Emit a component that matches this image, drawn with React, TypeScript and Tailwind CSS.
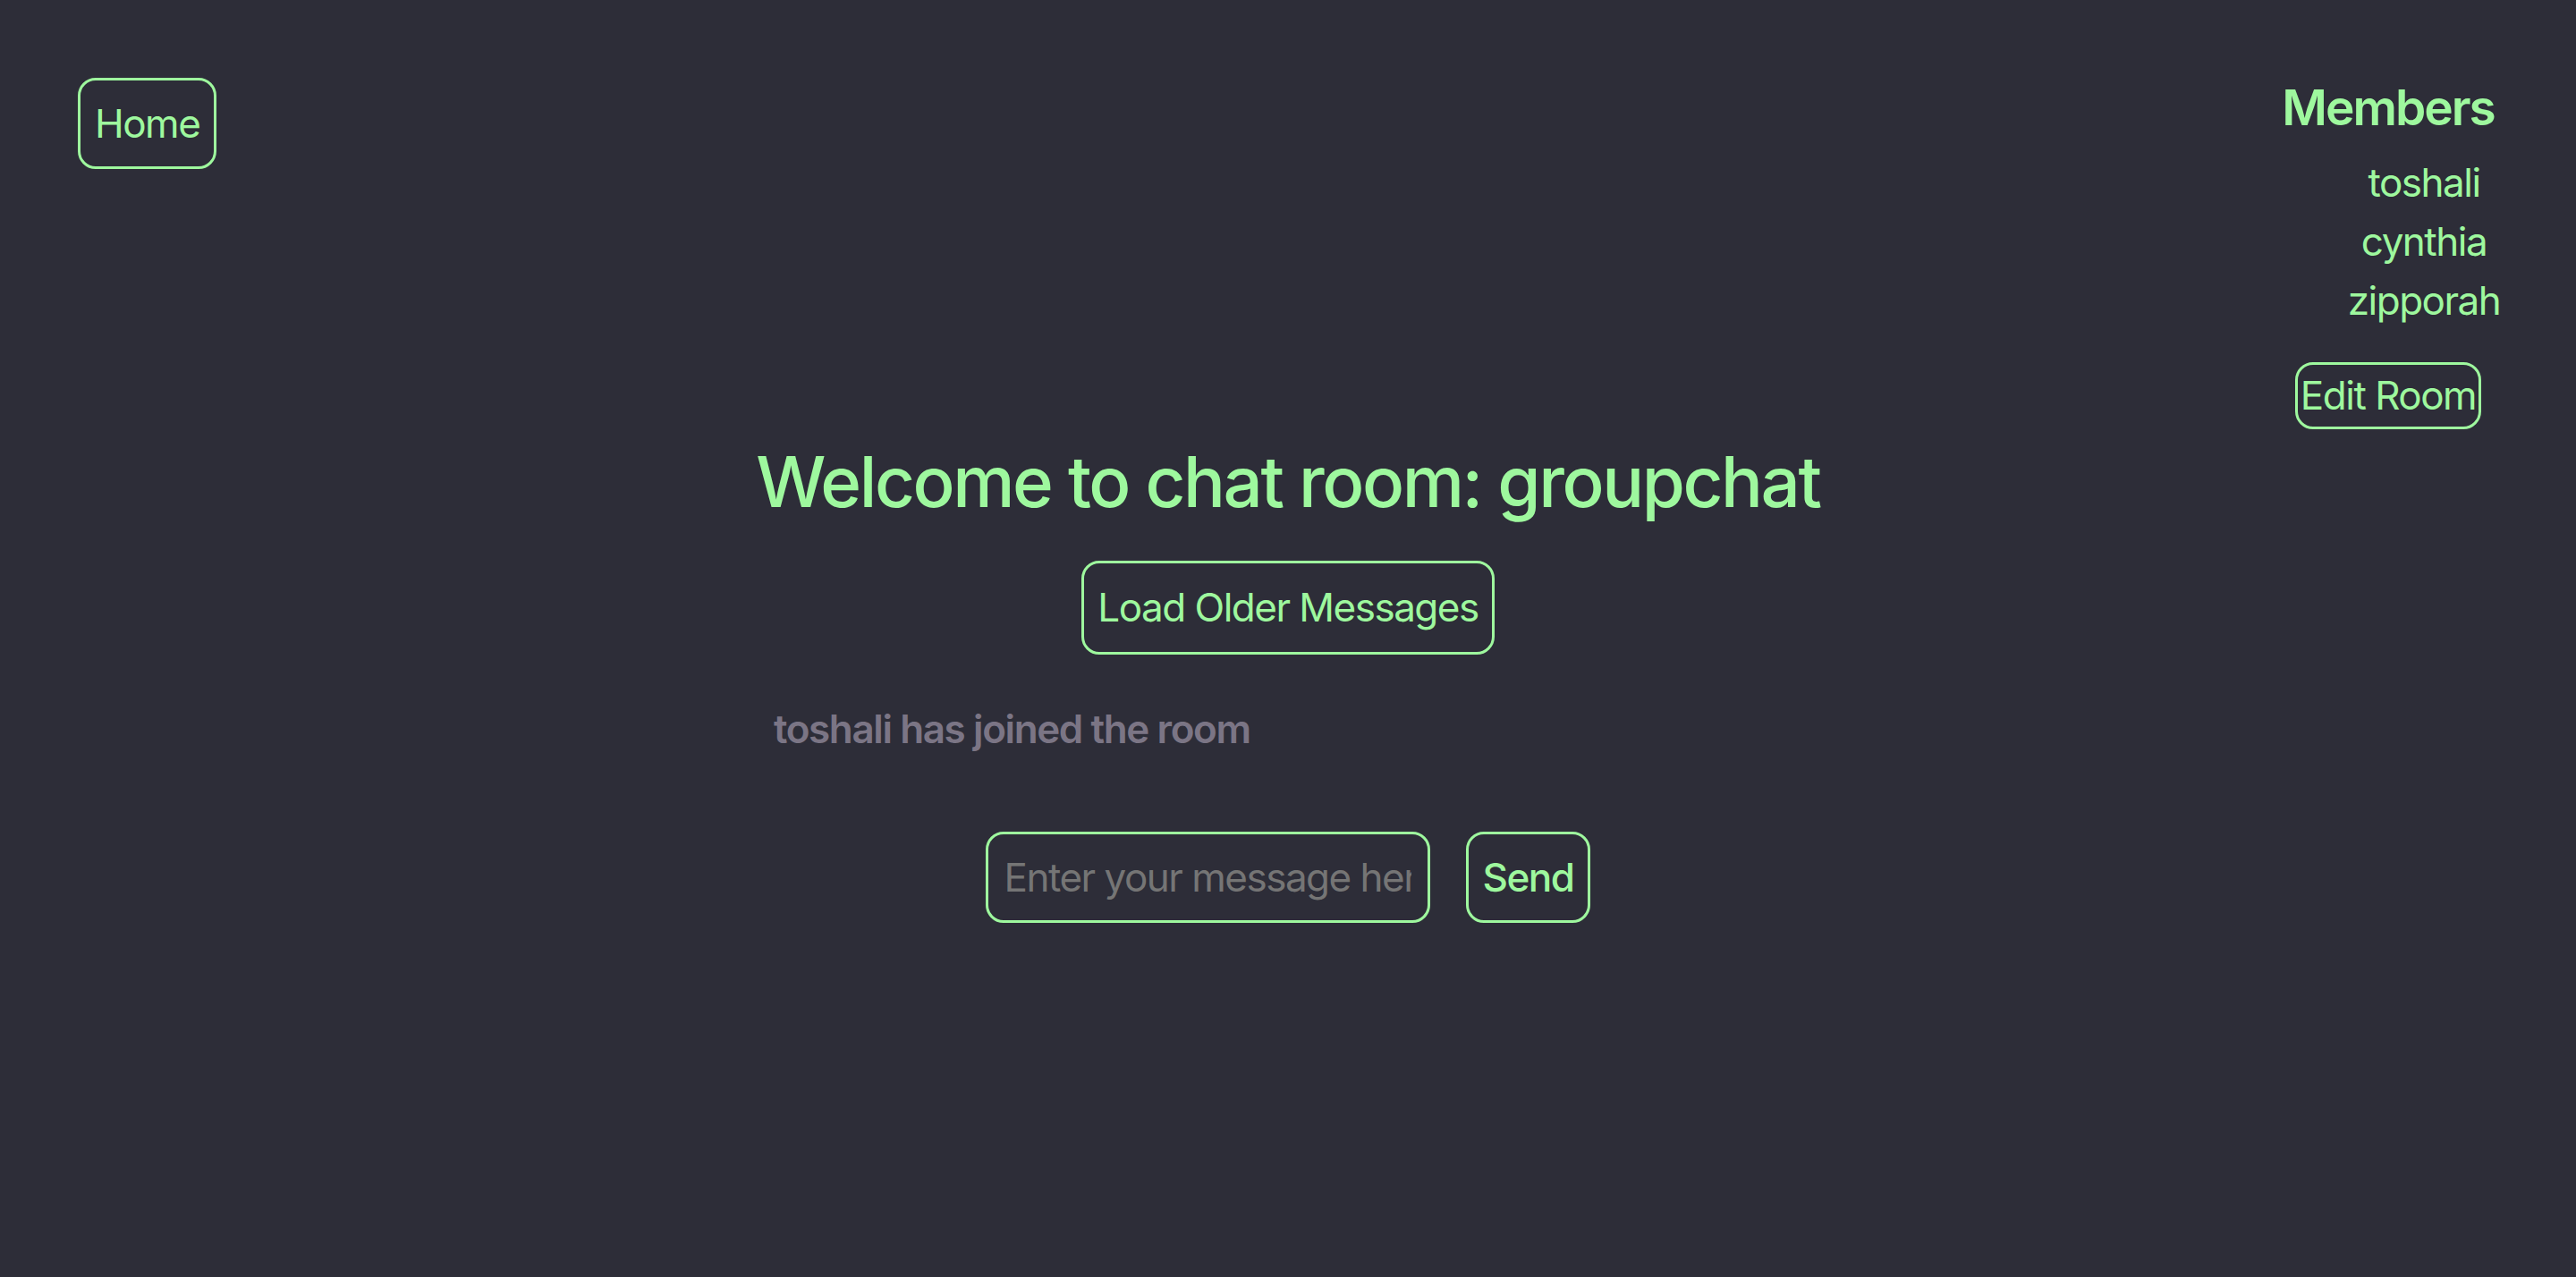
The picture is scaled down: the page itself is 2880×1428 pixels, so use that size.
const members = ['toshali', 'cynthia', 'zipporah']

const messages = [{ id: 1, text: 'toshali has joined the room' }]

export default function App() {
  return (
    <div className="min-h-screen h-[1428px] bg-[#2d2d38] text-[#9ef89e] font-['Inter','Liberation_Sans',sans-serif]">
      {/* top bar: home + members */}
      <div className="flex justify-between items-start pt-[87px] pl-[87px] pr-[60px]">
        <button className="border-[3px] border-[#9ef89e] rounded-[20px] px-[16px] py-[16px] text-[44px] leading-[64px] tracking-[-1.5px]">
          Home
        </button>

        <div className="w-[300px] flex flex-col items-center text-center">
          <h2 className="text-[55px] font-semibold leading-[66px] tracking-[-2px]">Members</h2>
          <ul className="w-full pl-[80px] mt-[18px]">
            {members.map((m) => (
              <li key={m} className="text-[44px] leading-[66px] tracking-[-1.5px]">
                {m}
              </li>
            ))}
          </ul>
          <button className="mt-[36px] border-[3px] border-[#9ef89e] rounded-[20px] px-[3px] py-[8px] text-[44px] leading-[53px] tracking-[-1.5px]">
            Edit Room
          </button>
        </div>
      </div>

      {/* chat area */}
      <div className="flex flex-col items-center mt-[12px]">
        <h1 className="text-[78px] font-medium leading-[94px] tracking-[-2.4px]">
          Welcome to chat room: groupchat
        </h1>
        <button className="mt-[41px] border-[3px] border-[#9ef89e] rounded-[20px] px-[15px] py-[17px] text-[44px] leading-[65px] tracking-[-1.5px]">
          Load Older Messages
        </button>

        <div className="w-[1150px] mt-[50px]">
          {messages.map((msg) => (
            <p key={msg.id} className="text-[44px] font-semibold leading-[66px] tracking-[-1.4px] text-[#7b7585]">
              {msg.text}
            </p>
          ))}
        </div>

        <form className="flex gap-[40px] mt-[82px]" onSubmit={(e) => e.preventDefault()}>
          <input
            type="text"
            placeholder="Enter your message here"
            className="w-[497px] h-[102px] bg-transparent border-[3px] border-[#9ef89e] rounded-[20px] px-[18px] text-[44px] tracking-[-1.5px] text-[#9ef89e] placeholder:text-[#757575] outline-none"
          />
          <button className="h-[102px] border-[3px] border-[#9ef89e] rounded-[20px] px-[16px] text-[44px] font-medium tracking-[-1.5px]">
            Send
          </button>
        </form>
      </div>
    </div>
  )
}
